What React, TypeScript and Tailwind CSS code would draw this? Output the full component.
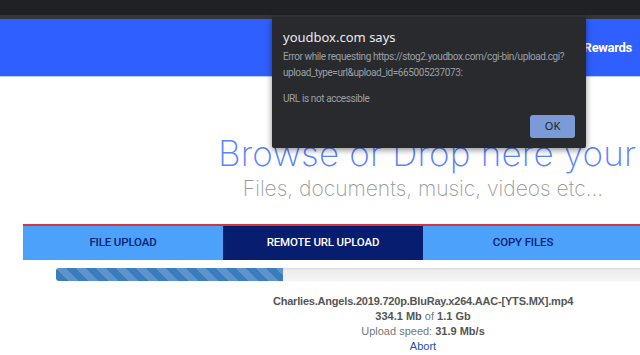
import React from "react";

export default function App() {
  return (
    <div className="relative w-[640px] h-[355px] overflow-hidden bg-white">
      <div className="h-[15px] bg-[#202124]" />
      <div className="h-[4px] bg-[#35363a]" />
      <div className="h-[58px] bg-[#2f5fff] border-b border-[#b9cbff] flex items-center justify-end pr-[8px]">
        <span className="text-white font-bold text-[13px] font-['Roboto',sans-serif] tracking-[-0.3px]">Rewards</span>
      </div>
      <div className="w-[800px] ml-[23px]">
        <div className="h-[55px]" />
        <div className="whitespace-nowrap pl-[195px] h-[42px] leading-[42px] text-[35px] font-extralight text-[#5b82ff] font-['Inter',sans-serif] tracking-[0.2px]">
          Browse or Drop here your files
        </div>
        <div className="text-center h-[30px] leading-[30px] text-[21px] font-extralight text-[#999] font-['Inter',sans-serif]">
          Files, documents, music, videos etc...
        </div>
        <div className="h-[20px]" />
        <div className="h-[2px] bg-[#d8343c]" />
        <div className="flex h-[34px] font-['Roboto',sans-serif] font-medium text-[11.5px] tracking-[-0.15px]">
          <div className="w-[200px] bg-[#4ca1fa] text-[#0b2275] flex items-center justify-center">FILE UPLOAD</div>
          <div className="w-[200px] bg-[#061d70] text-white flex items-center justify-center">REMOTE URL UPLOAD</div>
          <div className="w-[200px] bg-[#4ca1fa] text-[#0b2275] flex items-center justify-center">COPY FILES</div>
          <div className="w-[200px] bg-[#4ca1fa]" />
        </div>
        <div className="mt-[8px] mx-[33px] h-[13px] rounded-[3px] bg-[linear-gradient(#ebebeb,#f5f5f5)] overflow-hidden shadow-[inset_0_1px_2px_rgba(0,0,0,0.08)]">
          <div
            className="h-full bg-[#3a7dbf] bg-[linear-gradient(45deg,rgba(255,255,255,.18)_25%,transparent_25%,transparent_50%,rgba(255,255,255,.18)_50%,rgba(255,255,255,.18)_75%,transparent_75%,transparent)] bg-[length:20px_20px]"
            style={{ width: "227px" }}
          />
        </div>
        <div className="mt-[13px] text-center font-['Liberation_Sans',Arial,sans-serif] text-[11px] leading-[15px] text-[#777]">
          <div className="font-bold text-[#555] tracking-[-0.2px]">Charlies.Angels.2019.720p.BluRay.x264.AAC-[YTS.MX].mp4</div>
          <div>
            <b className="text-[#555]">334.1 Mb</b> of <b className="text-[#555]">1.1 Gb</b>
          </div>
          <div>
            Upload speed: <b className="text-[#555]">31.9 Mb/s</b>
          </div>
          <div className="text-[#1f4fa8]">Abort</div>
        </div>
      </div>

      <div className="absolute left-[272px] top-[17px] w-[314px] h-[131px] bg-[#292a2d] rounded-b-[2px] shadow-[0_2px_6px_rgba(0,0,0,0.45)] font-['Noto_Sans',sans-serif]">
        <div className="absolute left-[11px] top-[11px] text-[13px] text-[#e8eaed]">youdbox.com says</div>
        <div className="absolute left-[11px] top-[32px] font-['Roboto',sans-serif] text-[10px] leading-[16px] text-[#9aa0a6] tracking-[-0.4px] whitespace-nowrap">
          <div>Error while requesting https://stog2.youdbox.com/cgi-bin/upload.cgi?</div>
          <div>upload_type=url&amp;upload_id=665005237073:</div>
          <div className="mt-[10px]">URL is not accessible</div>
        </div>
        <div className="absolute left-[258px] top-[98px] w-[45px] h-[23px] rounded-[3px] bg-[#7a9bd7] flex items-center justify-center text-[11px] text-[#202124]">
          OK
        </div>
      </div>
    </div>
  );
}
